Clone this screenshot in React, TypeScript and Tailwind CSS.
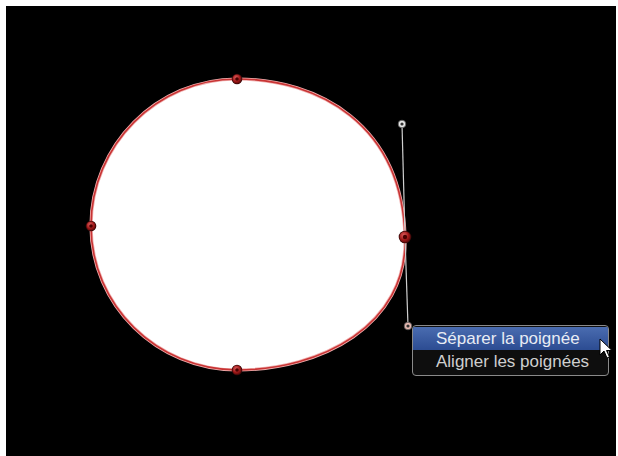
import React from "react";

function Knot({ x, y, r = 5 }: { x: number; y: number; r?: number }) {
  return (
    <g>
      <circle cx={x} cy={y} r={r + 0.8} fill="#3a0a0a" />
      <circle cx={x} cy={y} r={r} fill="url(#knot)" />
      <circle cx={x} cy={y} r={r * 0.4} fill="#4a0000" />
    </g>
  );
}

function Handle({ x, y, fill }: { x: number; y: number; fill: string }) {
  return (
    <g>
      <circle cx={x} cy={y} r={3.8} fill={fill} stroke="#555" strokeWidth={0.8} />
      <circle cx={x} cy={y} r={1.6} fill="#333" />
    </g>
  );
}

export default function App() {
  const d =
    "M237 79 C318 79 402 124 405 237 C408 326 320 370 237 370 C157 370 91 305 91 226 C91 145 157 79 237 79 Z";
  return (
    <div className="w-[618px] h-[456px] bg-white pl-[6px] pt-[6px] pr-[2px]">
      <div className="relative w-full h-full bg-black overflow-hidden">
        <svg
          className="absolute inset-0"
          width="610"
          height="450"
          viewBox="6 6 610 450"
        >
          <defs>
            <radialGradient id="knot" cx="0.4" cy="0.35" r="0.7">
              <stop offset="0" stopColor="#e06060" />
              <stop offset="0.6" stopColor="#a01818" />
              <stop offset="1" stopColor="#5a0808" />
            </radialGradient>
          </defs>
          <path d={d} fill="#ffffff" stroke="#f0b0b0" strokeWidth={3.2} />
          <path d={d} fill="none" stroke="#c83434" strokeWidth={1.6} />
          <line x1="402" y1="124" x2="405" y2="237" stroke="#cfcfcf" strokeWidth={1.2} />
          <line x1="405" y1="237" x2="408" y2="326" stroke="#cfcfcf" strokeWidth={1.2} />
          <Knot x={237} y={79} r={4.5} />
          <Knot x={91} y={226} r={4.5} />
          <Knot x={237} y={370} r={4.5} />
          <Knot x={405} y={237} r={5.5} />
          <Handle x={402} y={124} fill="#e8e8e8" />
          <Handle x={408} y={326} fill="#e6b8b0" />
        </svg>
        <div
          className="absolute left-[406px] top-[319px] w-[197px] h-[51px] rounded-[4px] border border-[#8a8a8a] bg-[#0e0e0e] overflow-hidden pt-[1px]"
          style={{ fontFamily: '"Liberation Sans", Arial, sans-serif' }}
        >
          <div className="h-[23px] bg-gradient-to-b from-[#4a6cb0] to-[#2c4c92] text-[#e8ecf4] text-[17px] leading-[23px] pl-[23px]">
            Séparer la poignée
          </div>
          <div className="h-[23px] text-[#cfcfcf] text-[17px] leading-[23px] pl-[23px]">
            Aligner les poignées
          </div>
        </div>
        <svg
          className="absolute left-[593px] top-[332px]"
          width="16"
          height="24"
          viewBox="0 0 16 24"
        >
          <path
            d="M1 1 L1 17 L5 13 L8 20 L10.5 19 L7.5 12.5 L13 12.5 Z"
            fill="#ffffff"
            stroke="#000000"
            strokeWidth={1}
            strokeLinejoin="round"
          />
        </svg>
      </div>
    </div>
  );
}
